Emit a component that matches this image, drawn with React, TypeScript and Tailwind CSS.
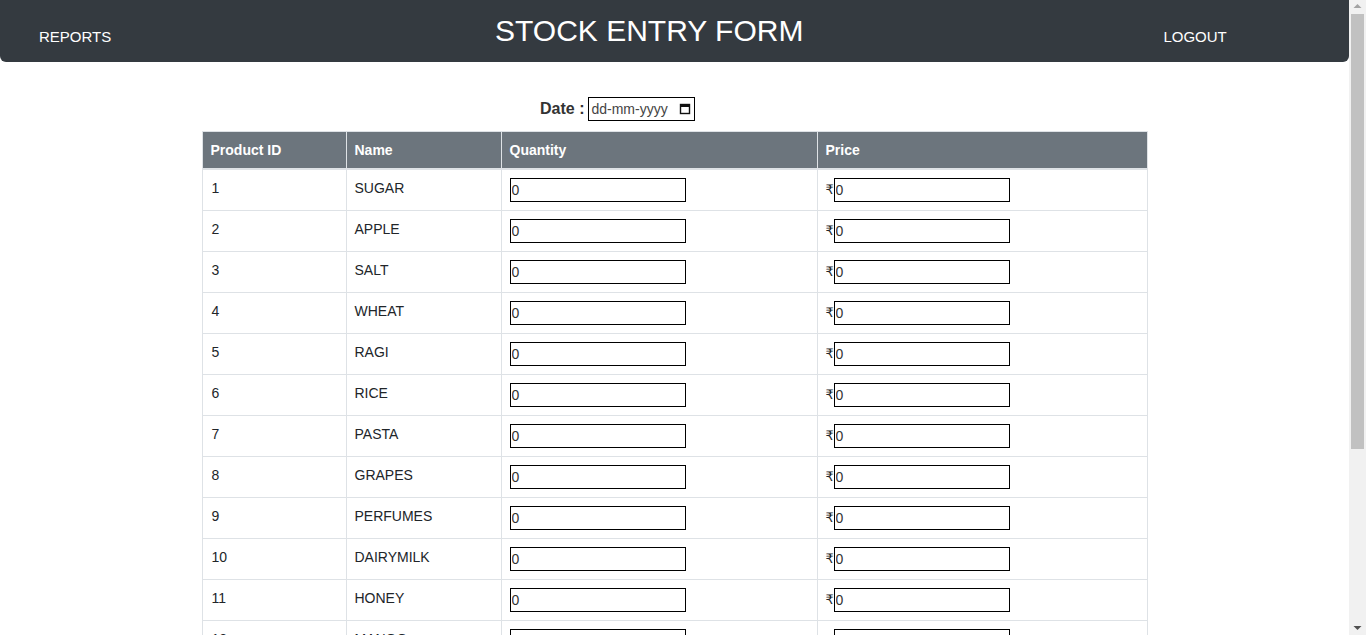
import React from 'react';

const products = [
  'SUGAR',
  'APPLE',
  'SALT',
  'WHEAT',
  'RAGI',
  'RICE',
  'PASTA',
  'GRAPES',
  'PERFUMES',
  'DAIRYMILK',
  'HONEY',
  'MANGO',
  'ORANGE',
  'OIL',
  'MILK',
  'BREAD',
];

function CalendarIcon() {
  return (
    <svg width="12" height="12" viewBox="0 0 12 12" className="shrink-0">
      <rect x="1.5" y="1.5" width="9" height="9" fill="none" stroke="#111" strokeWidth="1.4" />
      <rect x="1.5" y="1.5" width="9" height="2.5" fill="#111" />
    </svg>
  );
}

// browser scrollbar as it shows in the screenshot
function Scrollbar() {
  return (
    <div className="w-[17px] h-full bg-[#f1f1f1] flex flex-col items-center shrink-0">
      <svg width="9" height="14" viewBox="0 0 9 14" className="shrink-0">
        <path d="M0.5 8 L4.5 4 L8.5 8 Z" fill="#a3a3a3" />
      </svg>
      <div className="w-[13px] h-[435px] bg-[#c1c1c1]" />
      <div className="flex-1" />
      <svg width="9" height="14" viewBox="0 0 9 14" className="shrink-0">
        <path d="M0.5 5 L4.5 9 L8.5 5 Z" fill="#505050" />
      </svg>
    </div>
  );
}

export default function App() {
  return (
    <div className="h-screen flex overflow-hidden bg-white text-[#212529] font-['Liberation_Sans',Arial,sans-serif]">
      <div className="w-[1349px] shrink-0 overflow-hidden">
        {/* Header */}
        <div className="h-[62px] bg-[#343a40] rounded-b-md flex items-center px-[39px] text-white">
          <div className="w-[456px] pt-[13px] text-[15px]">REPORTS</div>
          <h1 className="text-[30px] leading-none">STOCK ENTRY FORM</h1>
          <div className="ml-[360px] pt-[13px] text-[15px]">LOGOUT</div>
        </div>

        {/* Date */}
        <div className="flex items-center pl-[540px] pt-[35px] pb-[10px]">
          <span className="font-bold text-base text-[#333] mr-1">Date :</span>
          <div className="w-[107px] h-6 border border-black flex items-center justify-between pl-[2px] pr-[3px] text-[14px] text-[#444]">
            <span>dd-mm-yyyy</span>
            <CalendarIcon />
          </div>
        </div>

        {/* Table */}
        <table className="w-[945px] mx-auto border-collapse text-[14px] table-fixed">
          <colgroup>
            <col className="w-[144px]" />
            <col className="w-[155px]" />
            <col className="w-[316px]" />
            <col className="w-[330px]" />
          </colgroup>
          <thead>
            <tr className="bg-[#6c757d] text-white text-left">
              <th className="border border-[#dee2e6] border-b-2 pl-2 pr-2 pt-[2px] h-[37px] font-bold">Product ID</th>
              <th className="border border-[#dee2e6] border-b-2 px-2 pt-[2px] font-bold">Name</th>
              <th className="border border-[#dee2e6] border-b-2 px-2 pt-[2px] font-bold">Quantity</th>
              <th className="border border-[#dee2e6] border-b-2 px-2 pt-[2px] font-bold">Price</th>
            </tr>
          </thead>
          <tbody>
            {products.map((name, i) => (
              <tr key={name}>
                <td className="border border-[#dee2e6] pl-[9px] pr-2 py-2 align-top leading-5">{i + 1}</td>
                <td className="border border-[#dee2e6] px-2 py-2 align-top leading-5">{name}</td>
                <td className="border border-[#dee2e6] px-2 py-2 align-top">
                  <input
                    defaultValue="0"
                    className="block w-[176px] h-6 border border-black px-[1px] text-[14px] text-[#333] outline-none"
                  />
                </td>
                <td className="border border-[#dee2e6] px-2 py-2 align-top">
                  <div className="flex items-center">
                    <span className="w-2 text-[13px] font-['DejaVu_Sans',sans-serif]">₹</span>
                    <input
                      defaultValue="0"
                      className="block w-[176px] h-6 border border-black px-[1px] text-[14px] text-[#333] outline-none"
                    />
                  </div>
                </td>
              </tr>
            ))}
          </tbody>
        </table>

        <div className="flex justify-center py-6">
          <button className="px-5 py-2 bg-[#343a40] text-white rounded text-sm">SUBMIT</button>
        </div>
      </div>
      <Scrollbar />
    </div>
  );
}
